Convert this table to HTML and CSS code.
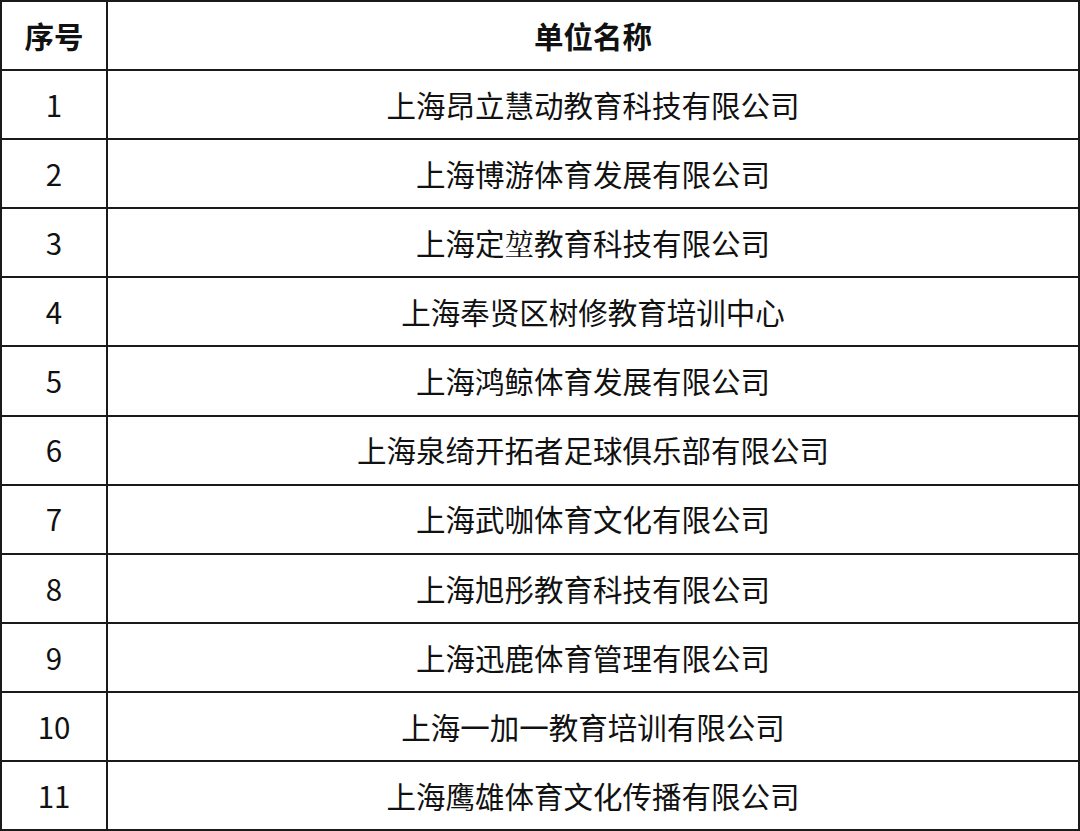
FILE: index.html
```html
<!DOCTYPE html>
<html lang="zh-CN">
<head>
<meta charset="utf-8">
<title>单位名称</title>
<link rel="stylesheet" href="styles.css">
</head>
<body>
<table class="list">
  <thead>
    <tr><th class="num">序号</th><th class="name">单位名称</th></tr>
  </thead>
  <tbody>
    <tr><td class="num">1</td><td class="name">上海昂立慧动教育科技有限公司</td></tr>
    <tr><td class="num">2</td><td class="name">上海博游体育发展有限公司</td></tr>
    <tr><td class="num">3</td><td class="name">上海定<span class="serif">堃</span>教育科技有限公司</td></tr>
    <tr><td class="num">4</td><td class="name">上海奉贤区树修教育培训中心</td></tr>
    <tr><td class="num">5</td><td class="name">上海鸿鲸体育发展有限公司</td></tr>
    <tr><td class="num">6</td><td class="name">上海泉绮开拓者足球俱乐部有限公司</td></tr>
    <tr><td class="num">7</td><td class="name">上海武咖体育文化有限公司</td></tr>
    <tr><td class="num">8</td><td class="name">上海旭彤教育科技有限公司</td></tr>
    <tr><td class="num">9</td><td class="name">上海迅鹿体育管理有限公司</td></tr>
    <tr><td class="num">10</td><td class="name">上海一加一教育培训有限公司</td></tr>
    <tr><td class="num">11</td><td class="name">上海鹰雄体育文化传播有限公司</td></tr>
  </tbody>
</table>
</body>
</html>
```
FILE: styles.css
```css
html, body {
  margin: 0;
  padding: 0;
  background: #ffffff;
}
body {
  width: 1080px;
  height: 831px;
  overflow: hidden;
  font-family: "Noto Sans CJK SC", "Noto Sans", sans-serif;
  color: #111111;
}
.list {
  width: 1080px;
  border-collapse: collapse;
  table-layout: fixed;
}
.list th,
.list td {
  border: 2px solid #1a1a1a;
  height: 67.1px;
  padding: 0;
  text-align: center;
  vertical-align: middle;
  font-size: 29.5px;
  line-height: 1;
}
.list th {
  font-weight: 700;
}
.list td {
  font-weight: 400;
}
.list .num {
  width: 104px;
}
.serif {
  font-family: "Noto Serif CJK SC", "Noto Sans CJK SC", serif;
}
```
